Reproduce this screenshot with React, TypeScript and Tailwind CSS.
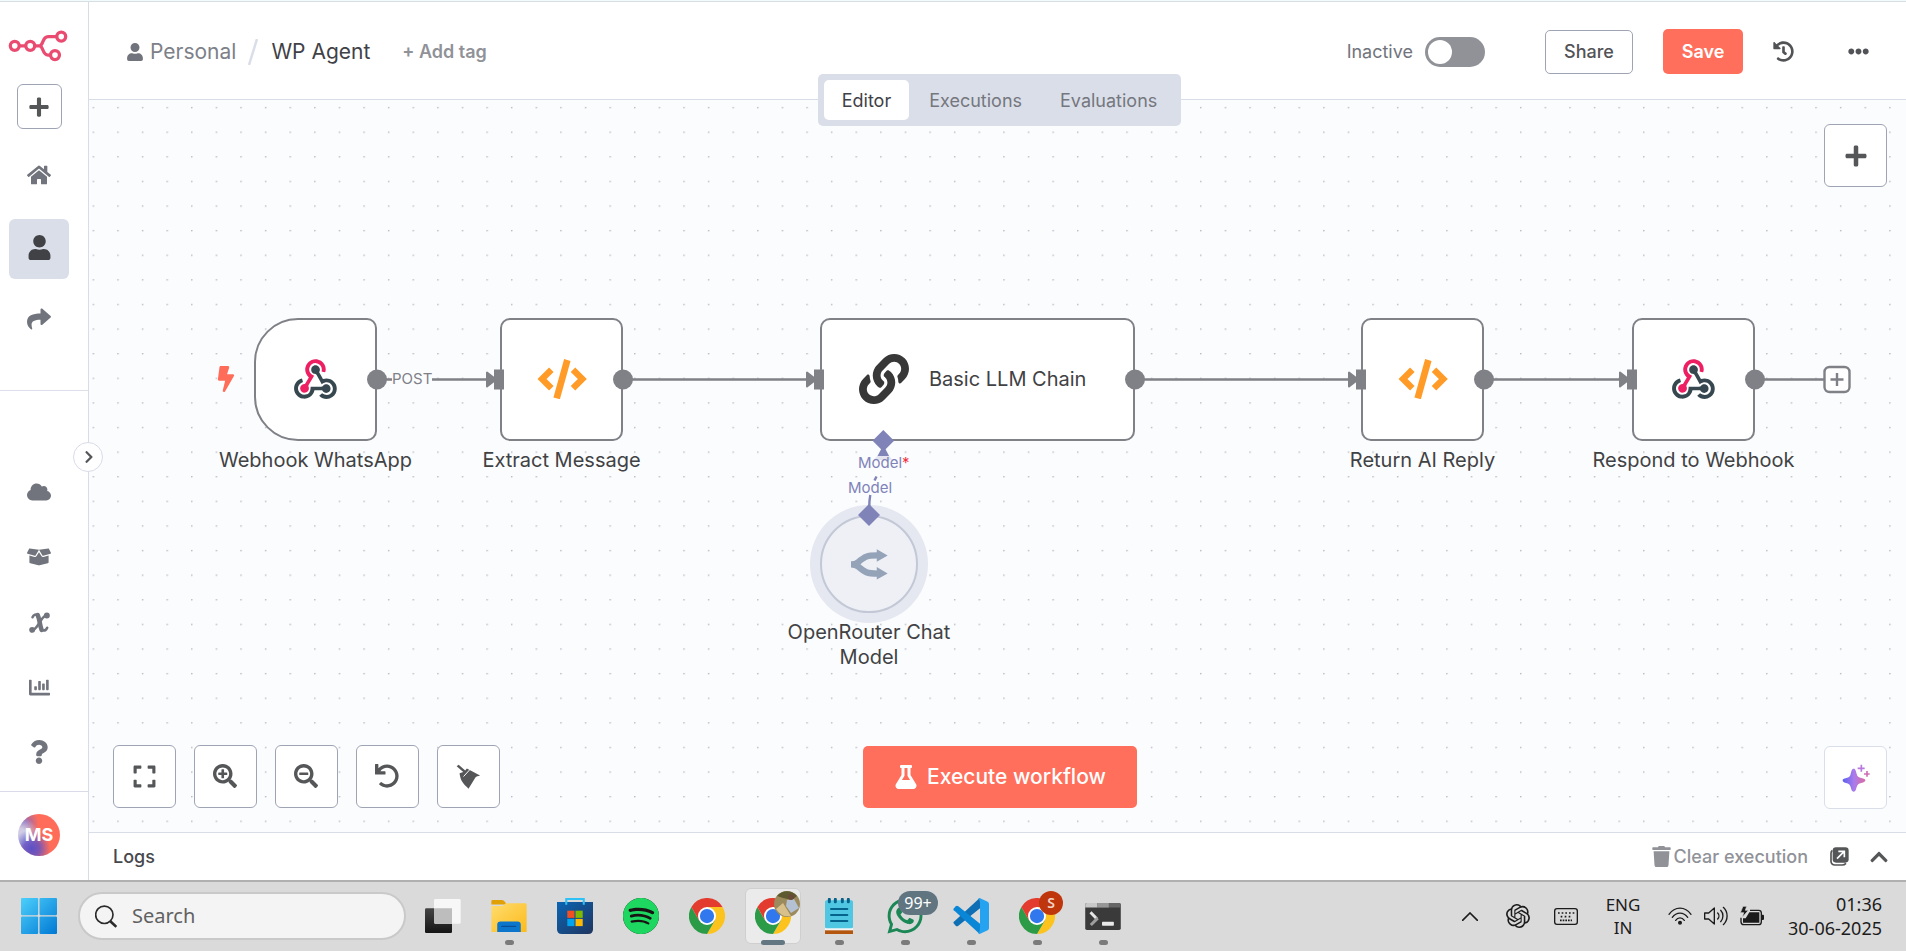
import React, { useState } from "react";
import type { ReactNode } from "react";
import {
  FaBolt,
  FaBoxOpen,
  FaChartBar,
  FaChevronRight,
  FaChevronUp,
  FaCloud,
  FaEllipsisH,
  FaExpand,
  FaFlask,
  FaHistory,
  FaHome,
  FaLink,
  FaPlus,
  FaQuestion,
  FaSearchMinus,
  FaSearchPlus,
  FaShare,
  FaTrash,
  FaUndo,
  FaUser,
  FaWhatsapp,
} from "react-icons/fa";
import { SiOpenai, SiSpotify } from "react-icons/si";

/* ---------- drawings ---------- */

function BrandLogo() {
  return (
    <svg viewBox="22 88 181 97" className="h-8 w-[60px]" fill="none" stroke="#ea4b71" strokeWidth="10">
      <circle cx="42" cy="136" r="13.5" />
      <circle cx="89" cy="136" r="13.5" />
      <circle cx="183" cy="108" r="13.5" />
      <circle cx="164" cy="164" r="13.5" />
      <path d="M56 136h19M103 136h14c12 0 8-28 26-28h26M117 136c12 0 8 28 26 28h7" />
    </svg>
  );
}

function WebhookIcon() {
  return (
    <svg viewBox="0 0 256 239" className="h-10 w-[43px]">
      <path
        fill="#ed1e61"
        d="M119.54 100.503c-10.61 17.836-20.775 35.108-31.152 52.25-2.665 4.401-3.984 7.986-1.855 13.58 5.878 15.454-2.414 30.493-17.998 34.575-14.697 3.851-29.016-5.808-31.932-21.543-2.584-13.927 8.224-27.58 23.58-29.757 1.286-.184 2.6-.205 4.762-.367l23.358-39.168C73.612 95.465 64.868 78.39 66.803 57.23c1.368-14.957 7.25-27.883 18-38.477 20.59-20.288 52.002-23.573 76.246-8.001 23.284 14.958 33.948 44.094 24.858 69.031-6.854-1.858-13.756-3.732-21.343-5.79 2.854-13.865.743-26.315-8.608-36.981-6.178-7.042-14.106-10.733-23.12-12.093-18.072-2.73-35.815 8.88-41.08 26.618-5.976 20.132 3.069 36.575 27.784 48.967z"
      />
      <path
        fill="#37474f"
        d="M149.841 79.41c7.475 13.187 15.065 26.573 22.587 39.836 38.02-11.763 66.686 9.284 76.97 31.817 12.422 27.219 3.93 59.457-20.465 76.25-25.04 17.238-56.707 14.293-78.892-7.851 5.654-4.733 11.336-9.487 17.407-14.566 21.912 14.192 41.077 13.524 55.305-3.282 12.133-14.337 11.87-35.714-.615-49.75-14.408-16.197-33.707-16.691-57.035-1.143-9.677-17.168-19.522-34.199-28.893-51.491-3.16-5.828-6.648-9.21-13.77-10.443-11.893-2.062-19.571-12.275-20.032-23.717-.453-11.316 6.214-21.545 16.634-25.53 10.322-3.949 22.435-.762 29.378 8.014 5.674 7.17 7.477 15.24 4.491 24.083-.83 2.466-1.905 4.852-3.07 7.774z"
      />
      <path
        fill="#37474f"
        d="M167.707 187.21h-45.77c-4.387 18.044-13.863 32.612-30.19 41.876-12.693 7.2-26.373 9.641-40.933 7.29-26.808-4.323-48.728-28.456-50.658-55.63-2.184-30.784 18.975-58.147 47.178-64.293 1.947 7.071 3.915 14.21 5.862 21.264-25.876 13.202-34.832 29.836-27.59 50.636 6.375 18.304 24.484 28.337 44.147 24.457 20.08-3.962 30.204-20.65 28.968-47.432 19.036 0 38.088-.197 57.126.097 7.434.117 13.173-.654 18.773-7.208 9.22-10.784 26.191-9.811 36.121.374 10.148 10.409 9.662 27.157-1.077 37.127-10.361 9.62-26.73 9.106-36.424-1.26-1.992-2.136-3.562-4.673-5.533-7.298z"
      />
    </svg>
  );
}

function CodeIcon() {
  return (
    <svg viewBox="170 208 150 120" className="h-10 w-[50px]" fill="none" stroke="#ff9b26">
      <path strokeWidth="19" d="M213 240 185 268l28 28M278 240l28 28-28 28" />
      <path strokeWidth="20" d="M261 211 229 326" />
    </svg>
  );
}

function RouterIcon() {
  return (
    <svg viewBox="273 777 112 93" className="h-[31px] w-[37px]">
      <path
        fill="none"
        stroke="#94a3b8"
        strokeWidth="19"
        d="M273 823c10 0 14 0 22-7 20-17 26-20 58-20M273 823c10 0 14 0 22 7 20 17 26 21 58 21"
      />
      <path fill="#94a3b8" d="M351 777v38l33-19zM351 831v38l33-18z" />
    </svg>
  );
}

function VariableIcon() {
  return (
    <svg viewBox="0 0 60 60" className="h-[21px] w-[21px]" fill="none" stroke="#71747c" strokeLinecap="round">
      <path strokeWidth="13" d="M25 9c6 12 5 28 11 42" />
      <path strokeWidth="7" d="M10 15c3-9 10-9 16-7M36 52c6 2 13 1 16-7M52 9c-12 0-16 14-22 22S18 52 8 52" />
      <circle cx="51" cy="10" r="5" fill="#71747c" strokeWidth="7" />
      <circle cx="9" cy="51" r="5" fill="#71747c" strokeWidth="7" />
    </svg>
  );
}

function BroomIcon() {
  return (
    <svg viewBox="1366 550 76 76" className="h-[25px] w-[25px]" fill="#555658">
      <path d="M1368 557l6-5 20 18 5-6 40 21c-6 3-11 2-14 6l-21 34c-6-7-20-18-24-32-2-7-3-13-3-15l11-4z" />
      <path d="M1389 588l22-24" stroke="#fff" strokeWidth="3" />
    </svg>
  );
}

function SparkleIcon() {
  return (
    <svg viewBox="1264 100 84 84" className="h-7 w-7">
      <defs>
        <linearGradient id="spark" x1="0" x2="1" y1="0" y2="0">
          <stop offset="0" stopColor="#5b60f0" />
          <stop offset="0.5" stopColor="#aa7bec" />
          <stop offset="1" stopColor="#dc6ba0" />
        </linearGradient>
      </defs>
      <path
        fill="url(#spark)"
        d="M1299 114c6 0 7 8 9 16s6 10 14 12 12 3 12 7-4 6-12 8-12 5-14 12-3 14-9 14-7-7-9-14-6-10-14-12-10-4-10-8 3-5 11-7 11-4 13-12 3-16 9-16z"
      />
      <path stroke="#b878e0" strokeWidth="5" d="M1322 102v21M1311 113h21" />
      <path stroke="#cf6fb4" strokeWidth="5" d="M1339 121v17M1330 130h17" />
    </svg>
  );
}

function PopOutIcon() {
  return (
    <svg viewBox="0 0 57 57" className="h-[19px] w-[19px]" fill="none">
      <path stroke="#555658" strokeWidth="5" d="M7 10c-4 3-4 6-4 9v23c0 8 4 12 12 12h22c5 0 8-2 11-5" />
      <rect x="8" y="1" width="48" height="46" rx="10" fill="#555658" />
      <path stroke="#fff" strokeWidth="5" d="M21 35l21-21M25 13h18v18" />
    </svg>
  );
}

function ChromeIcon() {
  return (
    <svg viewBox="0 0 48 48" className="size-9">
      <path fill="#fcc31e" d="M24 12h20.8A24 24 0 0 1 24 48l10-18z" />
      <path fill="#2b9b47" d="M13.6 30 3.2 12A24 24 0 0 0 24 48l10.4-18z" />
      <path fill="#e33b2e" d="M24 12h20.8A24 24 0 0 0 3.2 12l10.4 18z" />
      <circle cx="24" cy="24" r="12" fill="#fff" />
      <circle cx="24" cy="24" r="9.5" fill="#3178ee" />
    </svg>
  );
}

function StartIcon() {
  return (
    <svg viewBox="0 0 105 105" className="size-9">
      <defs>
        <linearGradient id="win" x1="0" y1="0" x2="1" y2="1" gradientUnits="objectBoundingBox">
          <stop offset="0" stopColor="#4dd0fb" />
          <stop offset="1" stopColor="#0078d4" />
        </linearGradient>
        <mask id="panes">
          <rect width="50" height="50" rx="3" fill="#fff" />
          <rect x="54" width="51" height="50" rx="3" fill="#fff" />
          <rect y="54" width="50" height="51" rx="3" fill="#fff" />
          <rect x="54" y="54" width="51" height="51" rx="3" fill="#fff" />
        </mask>
      </defs>
      <rect width="105" height="105" fill="url(#win)" mask="url(#panes)" />
    </svg>
  );
}

function TaskViewIcon() {
  return (
    <svg viewBox="0 0 108 102" className="h-[34px] w-9">
      <defs>
        <linearGradient id="tvDark" x1="0" y1="0" x2="0" y2="1">
          <stop offset="0" stopColor="#444" />
          <stop offset="1" stopColor="#151515" />
        </linearGradient>
      </defs>
      <rect y="28" width="81" height="74" rx="4" fill="url(#tvDark)" />
      <rect x="27" width="80" height="74" rx="4" fill="#f7f7f7" />
      <path fill="#bdbdbd" d="M27 28h54v46H31q-4 0-4-4z" />
    </svg>
  );
}

function FolderIcon() {
  return (
    <svg viewBox="0 0 108 98" className="h-8 w-9">
      <defs>
        <linearGradient id="fold" x1="0" y1="0" x2="1" y2="1">
          <stop offset="0" stopColor="#ffdc6e" />
          <stop offset="1" stopColor="#fcbb1c" />
        </linearGradient>
      </defs>
      <path fill="#e0a006" d="M0 3q0-3 4-3h29q6 0 10 8l4 6H0z" />
      <path fill="url(#fold)" d="M0 18h32q6 0 12-8h60q4 0 4 4v84H0z" />
      <path fill="#0b76cc" d="M18 98V76q0-10 10-10h52q10 0 10 10v22z" />
      <path stroke="#0a4f94" strokeWidth="4" strokeLinecap="round" d="M32 81h42" />
    </svg>
  );
}

function StoreIcon() {
  return (
    <svg viewBox="0 0 105 105" className="size-9">
      <defs>
        <linearGradient id="store" x1="0" y1="0" x2="1" y2="1">
          <stop offset="0" stopColor="#0a65b4" />
          <stop offset="1" stopColor="#20355f" />
        </linearGradient>
      </defs>
      <path fill="url(#store)" d="M0 12h105v79q0 14-14 14H14Q0 105 0 91z" />
      <path fill="none" stroke="#2ec1f5" strokeWidth="6" d="M27 20V3h51v17" />
      <path fill="#f25022" d="M30 37h21v21H30z" />
      <path fill="#7fba00" d="M54 37h21v21H54z" />
      <path fill="#00a4ef" d="M30 61h21v21H30z" />
      <path fill="#ffb900" d="M54 61h21v21H54z" />
    </svg>
  );
}

function NotepadIcon() {
  return (
    <svg viewBox="0 0 84 108" className="h-9 w-7">
      <path fill="#b4560e" d="M0 94h84v14H0z" />
      <path fill="#f4f4f4" d="M0 88h84v9H0z" />
      <rect y="7" width="84" height="84" rx="5" fill="#4fc6e2" />
      <path stroke="#04618a" strokeWidth="9" strokeLinecap="round" d="M13 4v7M31 4v7M52 4v7M70 4v7" />
      <path stroke="#05648e" strokeWidth="6" strokeLinecap="round" d="M18 33h49M18 51h49M18 69h49" />
    </svg>
  );
}

function EditorAppIcon() {
  return (
    <svg viewBox="0 0 108 108" className="size-9">
      <path fill="#0f6fb5" d="M80 0 6 68q-8 5-3 9l5 6q4 3 8 0L82 30z" />
      <path fill="#0a86d6" d="M80 108 6 40q-8-5-3-9l5-6q4-3 8 0l66 53z" />
      <path fill="#25a3f0" d="M80 0l24 11q4 2 4 7v72q0 5-4 7l-24 11q-4 0-4-4 5 2 5-3V7q0-5-5-3 0-4 4-4z" />
    </svg>
  );
}

function TerminalIcon() {
  return (
    <svg viewBox="0 0 108 82" className="h-[27px] w-9">
      <rect width="108" height="82" rx="5" fill="#3a3a3a" />
      <path fill="#c8c8c8" d="M0 5q0-5 5-5h31v14H0z" />
      <path fill="#979797" d="M36 0h36v14H36z" />
      <path fill="#666" d="M72 0h31q5 0 5 5v9H72z" />
      <path fill="none" stroke="#e6e6e6" strokeWidth="9" d="M16 28l19 20" />
      <path fill="none" stroke="#9e9e9e" strokeWidth="9" d="M38 46 17 67" />
      <rect x="51" y="57" width="36" height="12" rx="2" fill="#e8e8e8" />
    </svg>
  );
}

function SearchGlyph() {
  return (
    <svg viewBox="0 0 66 68" className="h-[23px] w-[22px]" fill="none" stroke="#2b2b2b">
      <circle cx="28" cy="29" r="26" strokeWidth="5" />
      <path strokeWidth="8" d="M46 48l18 17" />
    </svg>
  );
}

function KeyboardGlyph() {
  return (
    <svg viewBox="0 0 72 51" className="h-[17px] w-6" fill="none" stroke="#1b1b1b">
      <rect x="2" y="2" width="68" height="47" rx="7" strokeWidth="4" />
      <path strokeWidth="5" d="M12 15h5M23 15h5M34 15h5M45 15h5M56 15h5M20 26h5M32 26h5M44 26h5M18 37h36" strokeDasharray="5 3" />
    </svg>
  );
}

function WifiGlyph() {
  return (
    <svg viewBox="0 0 72 54" className="h-[18px] w-6" fill="none" stroke="#1b1b1b" strokeWidth="4" strokeLinecap="round">
      <path d="M3 22c18-25 48-25 66 0M13 31c12-17 34-17 46 0M23 40c7-10 19-10 26 0" />
      <circle cx="36" cy="47" r="4" fill="#1b1b1b" />
    </svg>
  );
}

function SpeakerGlyph() {
  return (
    <svg viewBox="0 0 72 60" className="h-5 w-6" fill="none" stroke="#1b1b1b" strokeWidth="4" strokeLinecap="round" strokeLinejoin="round">
      <path d="M2 21h12L31 6v48L14 39H2z" />
      <path d="M41 21c5 5 5 13 0 18M50 13c9 9 9 25 0 34M58 4c15 14 15 38 0 52" />
    </svg>
  );
}

function BatteryGlyph() {
  return (
    <svg viewBox="0 0 72 58" className="h-5 w-6">
      <path fill="none" stroke="#1b1b1b" strokeWidth="4" d="M30 12h26q8 0 8 8v26q0 9-8 9H12q-9 0-9-9V34" />
      <path fill="#1b1b1b" d="M28 18h30v31H9V36h8z" />
      <path fill="#1b1b1b" d="M66 25h3q3 0 3 4v8q0 4-3 4h-3z" />
      <path fill="#1b1b1b" stroke="#dadada" strokeWidth="2" d="M9 0h11l-4 12h9L7 33l4-14H1z" />
    </svg>
  );
}

/* ---------- sidebar ---------- */

function NavItem({ label, active, children }: { label: string; active?: boolean; children: ReactNode }) {
  return (
    <a
      href="#"
      aria-label={label}
      className={
        active
          ? "flex size-15 items-center justify-center rounded-md bg-[#dadee9] pb-1 text-[#404246]"
          : "flex size-15 items-center justify-center pb-1 text-[#71747c]"
      }
    >
      {children}
    </a>
  );
}

function Sidebar() {
  return (
    <aside className="relative flex w-[89px] shrink-0 flex-col border-r border-[#d9dce8] bg-white">
      <div className="flex w-[78px] flex-col items-center pt-7">
        <a href="#" aria-label="Home page" className="mr-[3px]">
          <BrandLogo />
        </a>
        <button aria-label="Create" className="mt-[22px] flex size-[45px] items-center justify-center rounded-md border border-[#9fa4b5] text-[#555658]">
          <FaPlus size={22} />
        </button>
        <nav aria-label="Projects" className="mt-[18px] flex flex-col items-center gap-3">
          <NavItem label="Overview"><FaHome size={24} /></NavItem>
          <NavItem label="Personal" active><FaUser size={25} /></NavItem>
          <NavItem label="Shared with you"><FaShare size={24} /></NavItem>
        </nav>
      </div>
      <div className="mt-[39px] h-px bg-[#dde0ec]" />
      <nav aria-label="Resources" className="mt-auto flex w-[78px] flex-col items-center gap-[5px] pb-[7px]">
        <NavItem label="Admin panel"><FaCloud size={24} /></NavItem>
        <NavItem label="Templates"><FaBoxOpen size={24} /></NavItem>
        <NavItem label="Variables"><VariableIcon /></NavItem>
        <NavItem label="Insights"><FaChartBar size={21} /></NavItem>
        <NavItem label="Help"><FaQuestion size={24} /></NavItem>
      </nav>
      <div className="flex h-[89px] shrink-0 border-t border-[#d9dce8] pt-[22px] pl-[18px]">
        <button
          aria-label="Account"
          className="flex size-[42px] items-center justify-center rounded-full bg-[radial-gradient(circle_at_32%_82%,#5b50c8_0%,#5b50c8cc_18%,transparent_42%),radial-gradient(circle_at_4%_52%,#cfcce4_0%,#cfcce4_16%,transparent_42%),radial-gradient(circle_at_12%_22%,#7a64c4_0%,transparent_32%),linear-gradient(#ff6d5a,#ff6d5a)] text-lg font-bold text-white"
        >
          MS
        </button>
      </div>
      <button
        aria-label="Expand sidebar"
        className="absolute top-[440px] -right-[15px] z-20 flex size-[30px] items-center justify-center rounded-full border border-[#d9dce8] bg-white pl-[2px] text-[#555658]"
      >
        <FaChevronRight size={14} />
      </button>
    </aside>
  );
}

/* ---------- header ---------- */

const TABS = ["Editor", "Executions", "Evaluations"];

function Header() {
  const [tab, setTab] = useState("Editor");
  return (
    <header className="relative z-10 flex h-[98px] shrink-0 items-center border-b border-[#d9dde6] bg-white pt-[2px] pr-[37px] pl-[37px]">
      <a href="#" className="flex items-center gap-[6px] text-[21px] text-[#7d8088]">
        <FaUser size={18} className="text-[#71747c]" />
        Personal
      </a>
      <svg viewBox="0 0 10 26" className="ml-3 h-[26px] w-[10px]" stroke="#dadee9" strokeWidth="2.5">
        <path d="M9 0 1 26" />
      </svg>
      <h1 className="ml-[13px] text-[21px] text-[#3f4146]">WP Agent</h1>
      <button className="ml-8 text-lg font-semibold text-[#909298]">+ Add tag</button>

      <div className="ml-auto flex items-center">
        <label htmlFor="active" className="text-lg text-[#71747c]">Inactive</label>
        <input
          id="active"
          type="checkbox"
          role="switch"
          className="ml-3 flex h-[30px] w-15 appearance-none items-center rounded-full bg-[#909298] px-[3px] before:block before:size-6 before:rounded-full before:bg-white checked:justify-end"
        />
        <button className="ml-15 h-11 w-[88px] rounded-[5px] border border-[#9fa4b5] text-lg font-medium text-[#525356]">Share</button>
        <button className="ml-[30px] h-[45px] w-20 rounded-[5px] bg-[#ff6f5c] text-lg font-semibold text-white">Save</button>
        <button aria-label="Workflow history" className="ml-[30px] text-[#525356]"><FaHistory size={21} /></button>
        <button aria-label="More" className="ml-[54px] text-[#525356]"><FaEllipsisH size={21} /></button>
      </div>

      <div className="pointer-events-none absolute inset-x-0 top-18 flex justify-center pl-1">
        <div role="tablist" className="pointer-events-auto flex gap-[2px] rounded-[5px] bg-[#dadee9] p-[6px]">
          {TABS.map((t) => (
            <button
              key={t}
              role="tab"
              aria-selected={t === tab}
              onClick={() => setTab(t)}
              className={
                t === tab
                  ? "h-10 rounded-[5px] bg-white px-[18px] pt-[2px] text-lg text-[#3f4146]"
                  : "h-10 rounded-[5px] px-[18px] pt-[2px] text-lg text-[#75777e]"
              }
            >
              {t}
            </button>
          ))}
        </div>
      </div>
    </header>
  );
}

/* ---------- canvas ---------- */

const LINE = "#7f8187";

const NODES = [
  { label: "Webhook WhatsApp", icon: "webhook", box: "left-[165px] rounded-l-[44px] rounded-r-[10px]" },
  { label: "Extract Message", icon: "code", box: "left-[411px] rounded-[10px]" },
  { label: "Return AI Reply", icon: "code", box: "left-[1272px] rounded-[10px]" },
  { label: "Respond to Webhook", icon: "webhook", box: "left-[1543px] rounded-[10px]" },
];

const EDGES = [
  { from: 288, to: 411 },
  { from: 534, to: 731 },
  { from: 1046, to: 1273 },
  { from: 1395, to: 1544 },
];

function Grid() {
  return (
    <svg className="absolute inset-0 size-full" aria-hidden="true">
      <defs>
        <pattern id="dots" x="3.6" y="6.9" width="24.61" height="24.61" patternUnits="userSpaceOnUse">
          <circle cx="0.8" cy="0.8" r="0.75" fill="#a5a7b0" />
        </pattern>
      </defs>
      <rect width="100%" height="100%" fill="url(#dots)" />
    </svg>
  );
}

function Edges() {
  return (
    <svg className="absolute top-0 left-0 h-[500px] w-[1817px]" aria-hidden="true" fill="none">
      {EDGES.map((e) => (
        <g key={e.from}>
          <path stroke={LINE} strokeWidth="2.4" d={`M${e.from} 279.5H${e.to - 8}`} />
          <path fill={LINE} stroke={LINE} strokeWidth="2" strokeLinejoin="round" d={`M${e.to - 13} 272.5v14l9-7z`} />
          <path fill={LINE} d={`M${e.to - 6} 269.5h10v20h-10z`} />
          <circle cx={e.from} cy="279.5" r="10" fill={LINE} />
        </g>
      ))}
      <path stroke={LINE} strokeWidth="2.4" d="M1666 279.5h69" />
      <circle cx="1666" cy="279.5" r="10" fill={LINE} />
      <rect x="1735.5" y="267" width="25" height="25" rx="5" fill="#fff" stroke={LINE} strokeWidth="2.4" />
      <path stroke={LINE} strokeWidth="2.4" d="M1741.5 279.5h13M1748 273v13" />
      <path stroke="#7f83b8" strokeWidth="2.4" d="M780.3 406c0-6 .5-8 1-11M785.5 380.5l2-4" />
      <path fill="#e3e4f0" d="M788.3 356h12l3 4h-19z" />
      <path fill="#7f83b8" d="M794.3 345l5.800 11h-11.600z" />
      <path fill="#7f83b8" d="M794.3 330l10.800 10.700-10.800 10.700-10.700-10.700z" />
    </svg>
  );
}

function Controls() {
  const items = [
    { label: "Zoom to fit", icon: <FaExpand size={25} /> },
    { label: "Zoom in", icon: <FaSearchPlus size={24} /> },
    { label: "Zoom out", icon: <FaSearchMinus size={24} /> },
    { label: "Reset zoom", icon: <FaUndo size={24} /> },
    { label: "Tidy up", icon: <BroomIcon /> },
  ];
  return (
    <div className="flex gap-[18px]">
      {items.map((i) => (
        <button key={i.label} aria-label={i.label} className="flex size-[63px] items-center justify-center rounded-md border border-[#9fa4b5] bg-white pr-px pb-px text-[#555658]">
          {i.icon}
        </button>
      ))}
    </div>
  );
}

function Canvas() {
  return (
    <main className="relative min-h-0 flex-1 overflow-hidden bg-[#fbfcfe]">
      <Grid />

      {NODES.map((n) => (
        <div key={n.label} className={`absolute top-[218px] flex size-[123px] items-center justify-center border-2 border-[#7f8187] bg-white pb-[2px] ${n.box}`}>
          {n.icon === "webhook" ? <WebhookIcon /> : <CodeIcon />}
          <span className="absolute top-[128px] text-xl leading-[25px] whitespace-nowrap text-[#414244]">{n.label}</span>
        </div>
      ))}

      <div className="absolute top-[218px] left-[731px] flex h-[123px] w-[315px] items-center gap-5 rounded-[10px] border-2 border-[#7f8187] bg-white pb-[2px] pl-[37px] text-[#383838]">
        <FaLink size={50} />
        <span className="text-xl text-[#414244]">Basic LLM Chain</span>
      </div>

      <div className="absolute top-[405px] left-[721px] flex size-[118px] items-center justify-center rounded-full bg-[#e5e8f0]">
        <div className="flex size-[98px] items-center justify-center rounded-full border-2 border-[#c3c8d6] bg-[#eef0f6]">
          <RouterIcon />
        </div>
        <svg viewBox="0 0 22 22" className="absolute -top-px size-[22px]" fill="#7f83b8">
          <path d="M11 0l11 11-11 11L0 11z" />
        </svg>
        <span className="absolute top-[115px] w-[180px] text-center text-xl leading-[25px] text-[#414244]">OpenRouter Chat Model</span>
      </div>

      <Edges />

      <FaBolt size={26} className="absolute top-[266px] left-[124px] text-[#ff6d5a]" />
      <span className="absolute top-[269px] left-[303px] bg-[#fbfcfe] text-[15px] leading-5 text-[#7f8187]">POST</span>
      <span className="absolute top-[353px] left-[769px] text-[15px] leading-5 text-[#7f83b8]">
        Model<span className="text-[#f5313c]">*</span>
      </span>
      <span className="absolute top-[378px] left-[759px] text-[15px] leading-5 text-[#7f83b8]">Model</span>

      <button aria-label="Add node" className="absolute top-6 right-[19px] flex size-[63px] items-center justify-center rounded-md border border-[#9fa4b5] bg-white text-[#555658]">
        <FaPlus size={24} />
      </button>

      <div className="absolute bottom-6 left-6">
        <Controls />
      </div>
      <div className="absolute inset-x-0 bottom-6 flex justify-center pl-[5px]">
        <button className="flex h-[62px] w-[274px] items-center justify-center gap-[9px] rounded-[5px] bg-[#ff6f5c] text-[21px] font-medium text-white">
          <FaFlask size={24} />
          Execute workflow
        </button>
      </div>
      <button aria-label="Ask assistant" className="absolute right-[19px] bottom-[23px] flex size-[63px] items-center justify-center rounded-md border border-[#dadee9] bg-white">
        <SparkleIcon />
      </button>
    </main>
  );
}

function LogsBar() {
  return (
    <section className="flex h-12 shrink-0 items-center border-t border-[#d9dde6] bg-white pr-[17px] pl-6">
      <h2 className="text-lg font-medium text-[#46484c]">Logs</h2>
      <button className="ml-auto flex items-center gap-[2px] text-lg font-medium text-[#909298]">
        <FaTrash size={21} />
        Clear execution
      </button>
      <button aria-label="Pop out" className="ml-[22px]"><PopOutIcon /></button>
      <button aria-label="Open panel" className="ml-5 text-[#555658]"><FaChevronUp size={20} /></button>
    </section>
  );
}

/* ---------- taskbar ---------- */

function AppButton({ label, state, children }: { label: string; state?: "open" | "focused"; children: ReactNode }) {
  return (
    <button
      aria-label={label}
      className={
        state === "focused"
          ? "relative flex size-14 items-center justify-center rounded-md border border-[#cfcfcf] bg-[#ebebeb]"
          : "relative flex size-14 items-center justify-center"
      }
    >
      {children}
      {state === "open" && <span className="absolute -bottom-px h-[5px] w-[9px] rounded-full bg-[#7b7b7b]" />}
      {state === "focused" && <span className="absolute -bottom-[2px] h-[5px] w-6 rounded-full bg-[#637783]" />}
    </button>
  );
}

function Taskbar() {
  return (
    <footer className="flex h-[71px] shrink-0 items-center border-t-2 border-[#b0b0b0] bg-[#dadada] pr-6 pb-px pl-[21px] font-['Noto_Sans','Open_Sans',sans-serif] text-lg text-[#1c1c1c]">
      <button aria-label="Start"><StartIcon /></button>
      <label className="ml-[21px] flex h-12 w-[328px] items-center gap-[15px] rounded-full border-2 border-[#c9c9c9] bg-[#f4f4f4] pl-[15px]">
        <SearchGlyph />
        <input aria-label="Search" placeholder="Search" className="w-52 bg-transparent text-xl outline-none placeholder:text-[#616161]" />
      </label>
      <div className="ml-[9px] flex items-center gap-[10px]">
        <AppButton label="Task view"><TaskViewIcon /></AppButton>
        <AppButton label="File Explorer" state="open"><FolderIcon /></AppButton>
        <AppButton label="Store"><StoreIcon /></AppButton>
        <AppButton label="Music">
          <span className="flex size-9 items-center justify-center rounded-full bg-[#191414] text-[#1ed760]"><SiSpotify size={36} /></span>
        </AppButton>
        <AppButton label="Browser"><ChromeIcon /></AppButton>
        <AppButton label="Browser, current window" state="focused">
          <ChromeIcon />
          <svg viewBox="0 0 26 26" className="absolute top-[2px] right-0 size-[26px]">
            <circle cx="13" cy="13" r="13" fill="#9b8a5c" />
            <path fill="#5c5a2e" d="M3 5a13 13 0 0 1 20 0l-5 4-9-2z" />
            <path fill="#d7c08a" d="M2 18l7-6 8 13q-9 2-15-7z" />
            <path fill="#b4c1d2" d="M13 9l7-1 5 9-8 5-5-7z" />
            <circle cx="17" cy="6" r="3" fill="#6b4a3a" />
          </svg>
        </AppButton>
        <AppButton label="Notepad" state="open"><NotepadIcon /></AppButton>
        <AppButton label="Chat" state="open">
          <FaWhatsapp size={40} className="text-[#1b8755]" />
          <span className="absolute top-[3px] left-[21px] flex h-6 w-10 items-center justify-center rounded-full bg-[#617581] text-base text-white">99+</span>
        </AppButton>
        <AppButton label="Code editor" state="open"><EditorAppIcon /></AppButton>
        <AppButton label="Browser, second profile" state="open">
          <ChromeIcon />
          <span className="absolute top-[3px] right-[2px] flex size-6 items-center justify-center rounded-full bg-[#bf360c] text-sm font-semibold text-[#f3d3c8]">S</span>
        </AppButton>
        <AppButton label="Terminal" state="open"><TerminalIcon /></AppButton>
      </div>

      <div className="ml-auto flex items-center">
        <button aria-label="Hidden icons">
          <svg viewBox="0 0 16 9" className="h-[9px] w-4" fill="none" stroke="#1b1b1b" strokeWidth="1.6"><path d="M0 9l8-8 8 8" /></svg>
        </button>
        <button aria-label="Assistant" className="ml-7"><SiOpenai size={24} /></button>
        <button aria-label="Touch keyboard" className="ml-6"><KeyboardGlyph /></button>
        <button className="ml-6 w-[42px] text-center text-[17px] leading-[23px]">
          ENG<br />IN
        </button>
        <div className="ml-6 flex items-center gap-3">
          <WifiGlyph />
          <SpeakerGlyph />
          <BatteryGlyph />
        </div>
        <div className="ml-6 text-right text-lg leading-6">
          <div>01:36</div>
          <div>30-06-2025</div>
        </div>
      </div>
    </footer>
  );
}

export default function App() {
  return (
    <div className="flex h-screen flex-col bg-white font-['Inter',sans-serif]">
      <div className="h-[2px] shrink-0 border-b border-[#d6e0e4] bg-[#f2fafc]" />
      <div className="flex min-h-0 flex-1">
        <Sidebar />
        <div className="flex min-w-0 flex-1 flex-col">
          <Header />
          <Canvas />
          <LogsBar />
        </div>
      </div>
      <Taskbar />
    </div>
  );
}
